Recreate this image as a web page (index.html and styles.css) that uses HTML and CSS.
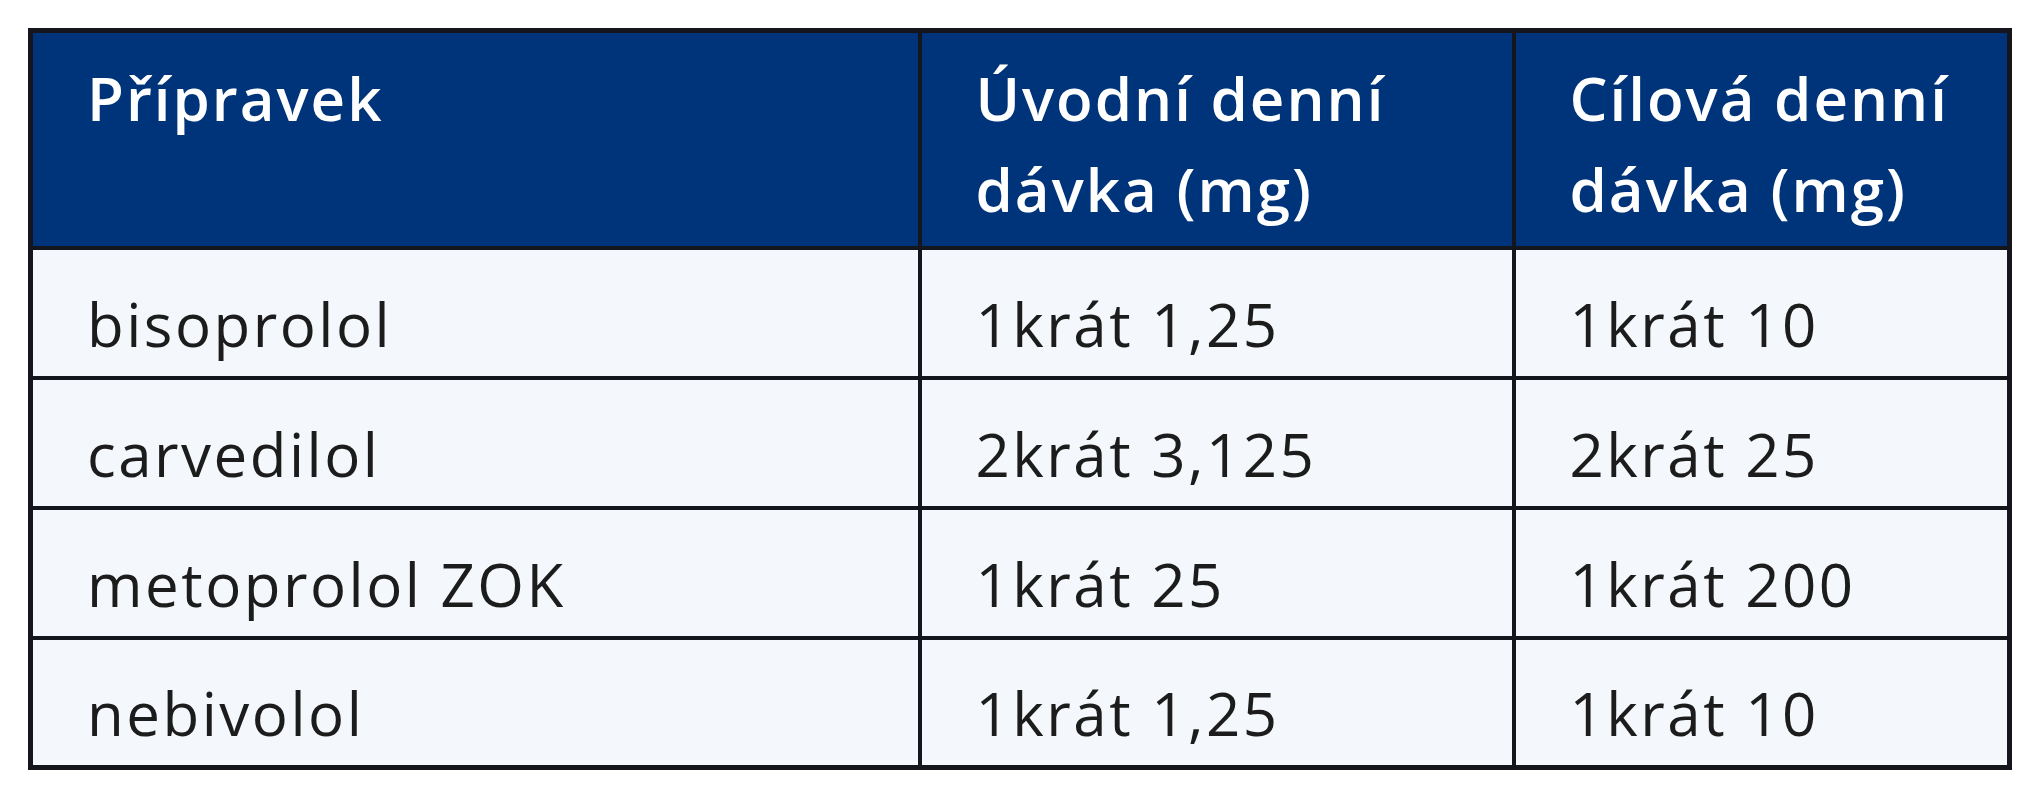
FILE: index.html
```html
<!DOCTYPE html>
<html lang="cs">
<head>
<meta charset="utf-8">
<title>Přípravky</title>
<link rel="stylesheet" href="styles.css">
</head>
<body>
<table class="dose-table">
  <colgroup>
    <col class="col-name">
    <col class="col-start">
    <col class="col-target">
  </colgroup>
  <thead>
    <tr class="head-row">
      <th>Přípravek</th>
      <th>Úvodní denní<br>dávka (mg)</th>
      <th>Cílová denní<br>dávka (mg)</th>
    </tr>
  </thead>
  <tbody>
    <tr class="body-row">
      <td>bisoprolol</td>
      <td>1krát 1,25</td>
      <td>1krát 10</td>
    </tr>
    <tr class="body-row">
      <td>carvedilol</td>
      <td>2krát 3,125</td>
      <td>2krát 25</td>
    </tr>
    <tr class="body-row">
      <td>metoprolol ZOK</td>
      <td>1krát 25</td>
      <td>1krát 200</td>
    </tr>
    <tr class="body-row">
      <td>nebivolol</td>
      <td>1krát 1,25</td>
      <td>1krát 10</td>
    </tr>
  </tbody>
</table>
</body>
</html>
```
FILE: styles.css
```css
html, body {
  margin: 0;
  padding: 0;
  background: #ffffff;
}

body {
  padding: 28px 0 0 28px;
  font-family: "Open Sans", "Noto Sans", sans-serif;
}

.dose-table {
  border-collapse: collapse;
  border: 5px solid #15151d;
  width: 1979px;
  table-layout: fixed;
}

.col-name { width: 889px; }
.col-start { width: 594px; }
.col-target { width: 496px; }

.dose-table th,
.dose-table td {
  border: 4px solid #15151d;
  text-align: left;
  padding: 0 0 0 54px;
}

.dose-table th {
  background: #00347a;
  color: #ffffff;
  font-weight: 600;
  font-size: 60px;
  letter-spacing: 2px;
  line-height: 91px;
  vertical-align: top;
  padding-top: 20px;
  padding-bottom: 0;
}

.head-row {
  height: 217px;
}

.dose-table td {
  background: #f4f8fd;
  color: #1c1c1c;
  font-weight: 400;
  font-size: 60px;
  letter-spacing: 2.5px;
  line-height: 70px;
  vertical-align: middle;
  padding-top: 22px;
}

.body-row {
  height: 130px;
}
```
